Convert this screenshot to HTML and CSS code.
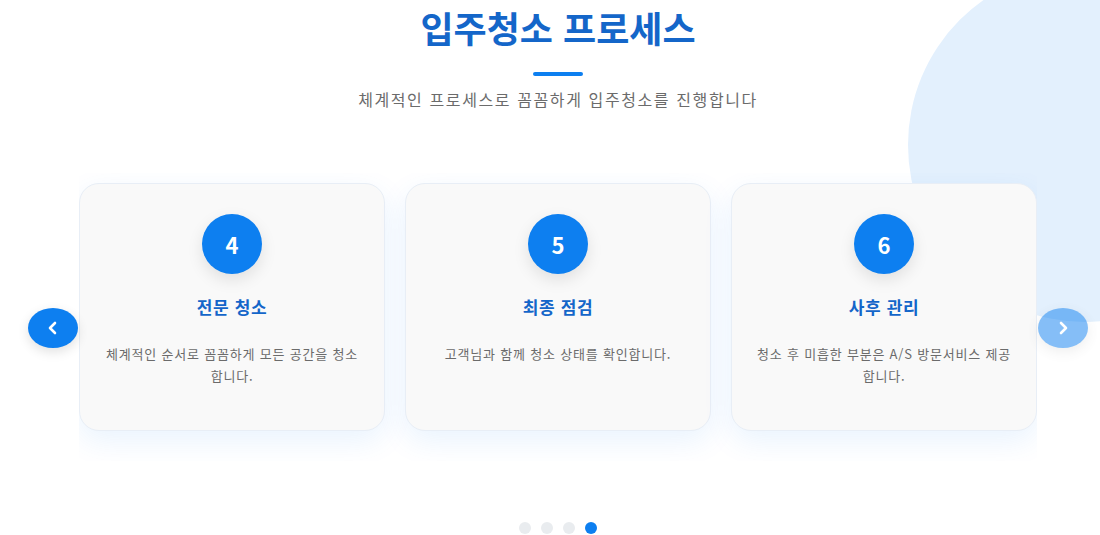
FILE: index.html
```html
<!DOCTYPE html>
<html lang="ko">
<head>
<meta charset="utf-8">
<title>입주청소 프로세스</title>
<link rel="stylesheet" href="styles.css">
</head>
<body>
<section class="process">
  <div class="deco-circle"></div>
  <div class="inner">
    <header class="head">
      <h2 class="title">입주청소 프로세스</h2>
      <div class="bar"></div>
      <p class="subtitle">체계적인 프로세스로 꼼꼼하게 입주청소를 진행합니다</p>
    </header>

    <div class="carousel">
      <button class="arrow arrow-prev" aria-label="이전">
        <svg width="14" height="16" viewBox="0 0 14 16"><path d="M9 3 L4 8 L9 13" fill="none" stroke="#fff" stroke-width="2.6" stroke-linecap="round" stroke-linejoin="round"/></svg>
      </button>
      <div class="viewport">
        <div class="track">
          <article class="card">
            <div class="num">4</div>
            <h3 class="card-title">전문 청소</h3>
            <p class="card-desc">체계적인 순서로 꼼꼼하게 모든 공간을 청소 합니다.</p>
          </article>
          <article class="card">
            <div class="num">5</div>
            <h3 class="card-title">최종 점검</h3>
            <p class="card-desc">고객님과 함께 청소 상태를 확인합니다.</p>
          </article>
          <article class="card">
            <div class="num">6</div>
            <h3 class="card-title">사후 관리</h3>
            <p class="card-desc">청소 후 미흡한 부분은 A/S 방문서비스 제공 합니다.</p>
          </article>
        </div>
      </div>
      <button class="arrow arrow-next" aria-label="다음">
        <svg width="14" height="16" viewBox="0 0 14 16"><path d="M5 3 L10 8 L5 13" fill="none" stroke="#fff" stroke-width="2.6" stroke-linecap="round" stroke-linejoin="round"/></svg>
      </button>
    </div>

    <div class="dots">
      <span class="dot"></span>
      <span class="dot"></span>
      <span class="dot"></span>
      <span class="dot active"></span>
    </div>
  </div>
</section>
</body>
</html>
```

FILE: styles.css
```css
* { box-sizing: border-box; }

html, body {
  margin: 0;
  padding: 0;
  background: #ffffff;
}

body {
  font-family: "Noto Sans CJK KR", "Noto Sans", sans-serif;
  width: 1100px;
  height: 535px;
  overflow: hidden;
  word-break: keep-all;
}

.process {
  position: relative;
  width: 1100px;
  height: 535px;
  overflow: hidden;
  padding-left: 16px;
}

.deco-circle {
  position: absolute;
  left: 908px;
  top: -32px;
  width: 354px;
  height: 354px;
  border-radius: 50%;
  background: #e3f0fd;
}

.inner {
  position: relative;
  display: flex;
  flex-direction: column;
  align-items: center;
  padding-top: 5px;
}

.head {
  display: flex;
  flex-direction: column;
  align-items: center;
}

.title {
  margin: 0;
  font-size: 36px;
  line-height: 44px;
  font-weight: 700;
  color: #1466c9;
  letter-spacing: 0;
}

.bar {
  width: 50px;
  height: 4px;
  border-radius: 2px;
  background: #0d7ff0;
  margin-top: 23px;
}

.subtitle {
  margin: 11px 0 0;
  font-size: 16px;
  line-height: 24px;
  color: #6b6b6b;
  letter-spacing: 1.6px;
}

.carousel {
  position: relative;
  margin-top: 62px;
  width: 958px;
}

.viewport {
  width: 958px;
  overflow: hidden;
  padding: 10px 0 30px;
}

.track {
  display: flex;
  gap: 20px;
}

.card {
  flex: 0 0 306px;
  height: 248px;
  background: #f9f9f9;
  border: 1px solid #e8eef6;
  border-radius: 20px;
  box-shadow: 0 10px 30px rgba(13, 127, 240, 0.09);
  display: flex;
  flex-direction: column;
  align-items: center;
  padding: 30px 22px 0;
  text-align: center;
}

.num {
  width: 60px;
  height: 60px;
  border-radius: 50%;
  background: #0d7ff0;
  color: #ffffff;
  font-size: 22px;
  font-weight: 700;
  display: flex;
  align-items: center;
  justify-content: center;
  box-shadow: 0 6px 16px rgba(0, 0, 0, 0.1);
}

.card-title {
  margin: 20px 0 0;
  font-size: 17px;
  line-height: 26px;
  font-weight: 700;
  color: #1466c9;
  letter-spacing: 0.6px;
}

.card-desc {
  margin: 23px 0 0;
  font-size: 13px;
  line-height: 22px;
  color: #6b6b6b;
  letter-spacing: 0.8px;
}

.arrow {
  position: absolute;
  top: 135px;
  width: 50px;
  height: 40px;
  border: 0;
  border-radius: 50%;
  background: #0d7ff0;
  display: flex;
  align-items: center;
  justify-content: center;
  padding: 0;
  box-shadow: 0 4px 12px rgba(0, 0, 0, 0.12);
}

.arrow-prev { left: -51px; }
.arrow-next { right: -51px; opacity: 0.5; }

.dots {
  display: flex;
  gap: 10px;
  margin-top: 61px;
}

.dot {
  width: 12px;
  height: 12px;
  border-radius: 50%;
  background: #e9ecef;
}

.dot.active { background: #0d7ff0; }
```
